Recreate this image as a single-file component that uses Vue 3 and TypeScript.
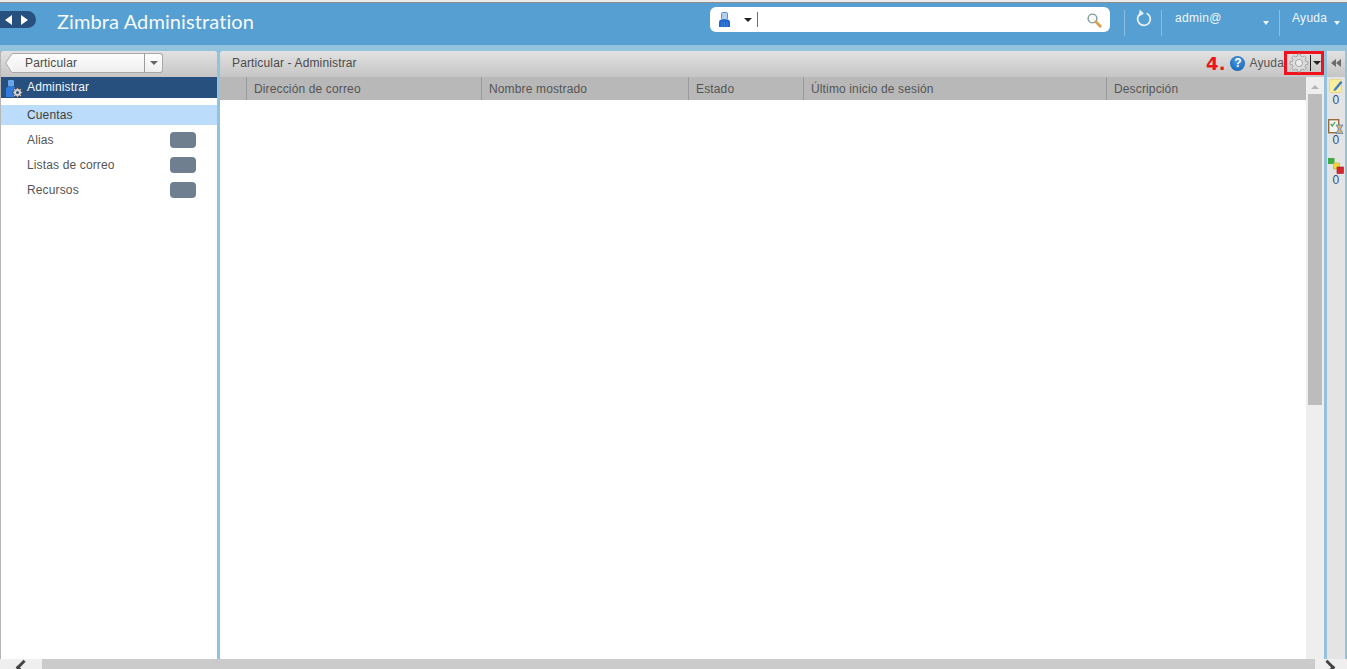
<script setup lang="ts">
const navItems = [
  { label: 'Cuentas', selected: true, badge: false },
  { label: 'Alias', selected: false, badge: true },
  { label: 'Listas de correo', selected: false, badge: true },
  { label: 'Recursos', selected: false, badge: true },
]

const columns = [
  { label: '', width: 27 },
  { label: 'Dirección de correo', width: 235 },
  { label: 'Nombre mostrado', width: 207 },
  { label: 'Estado', width: 115 },
  { label: 'Último inicio de sesión', width: 303 },
  { label: 'Descripción', width: 199 },
]

// cog outline, used by the toolbar button and the section icon
const gearPath = (cx: number, cy: number, outer: number, inner: number, teeth: number) => {
  const pts: string[] = []
  const step = (Math.PI * 2) / teeth
  for (let i = 0; i < teeth; i++) {
    const a = i * step
    const offsets = [
      [-0.3, inner],
      [-0.18, outer],
      [0.18, outer],
      [0.3, inner],
    ]
    for (const [o, r] of offsets) {
      const t = a + o * step
      pts.push(`${(cx + Math.cos(t) * r).toFixed(2)} ${(cy + Math.sin(t) * r).toFixed(2)}`)
    }
  }
  return `M${pts.join('L')}Z`
}

const toolbarGear = gearPath(10, 10, 9, 7, 8)
const sectionGear = gearPath(11.5, 12.5, 5, 3.8, 8)
</script>

<template>
  <div class="app">
    <div class="top-strip"></div>
    <header class="header">
      <div class="history">
        <span class="tri tri-left"></span>
        <span class="tri tri-right"></span>
      </div>
      <div class="brand">Zimbra Administration</div>
      <div class="search">
        <svg class="search-user" width="11" height="15" viewBox="0 0 11 15">
          <rect x="2.5" y="0.5" width="6" height="7" rx="1" fill="#b4cfee" stroke="#5a8fd0" />
          <path d="M0 15V10.5Q0 7.5 3 7.5H8Q11 7.5 11 10.5V15Z" fill="#1f68d0" />
          <path d="M3 10V15M5.5 10V15M8 10V15" stroke="#5b93e0" stroke-width="0.6" />
        </svg>
        <span class="search-caret"></span>
        <span class="search-cursor"></span>
        <svg class="search-glass" width="15" height="15" viewBox="0 0 15 15">
          <circle cx="5.5" cy="5.5" r="4.4" fill="#f6fafa" stroke="#7f9a9c" stroke-width="1.4" />
          <path d="M8.8 8.8L13.3 13.3" stroke="#d9a24a" stroke-width="2.8" stroke-linecap="round" />
        </svg>
      </div>
      <div class="sep sep-a"></div>
      <svg class="refresh" width="16" height="18" viewBox="0 0 16 18">
        <path d="M4.6 4.6A6.4 6.4 0 1 0 10.6 4.2" fill="none" stroke="#e8f2f9" stroke-width="1.8" />
        <path d="M3.6 0.6L8 4.4L3 7.4Z" fill="#e8f2f9" />
      </svg>
      <div class="sep sep-b"></div>
      <div class="user">admin@</div>
      <span class="head-caret caret-user"></span>
      <div class="sep sep-c"></div>
      <div class="user help">Ayuda</div>
      <span class="head-caret caret-help"></span>
    </header>
    <div class="band"></div>

    <div class="body">
      <aside class="left">
        <div class="left-bar">
          <div class="crumb">
            <svg class="crumb-back" width="8" height="20" viewBox="0 0 8 20">
              <path d="M8 0.5H7L0.7 10L7 19.5H8" fill="#f6f6f6" stroke="#a8a8a8" />
            </svg>
            <span class="crumb-label">Particular</span>
            <span class="crumb-drop"><span class="drop-tri"></span></span>
          </div>
        </div>
        <div class="section">
          <svg class="section-icon" width="17" height="18" viewBox="0 0 17 18">
            <rect x="2" y="0" width="6" height="6.5" rx="1" fill="#6aa6ec" />
            <path d="M0 17V9Q0 7 2 7H9V17Z" fill="#2f7be0" />
            <path :d="sectionGear" fill="#d4d4d4" stroke="#3a3a3a" stroke-width="0.7" />
            <circle cx="11.5" cy="12.5" r="1.5" fill="#27507f" />
          </svg>
          <span>Administrar</span>
        </div>
        <ul class="nav">
          <li v-for="item in navItems" :key="item.label" :class="['nav-item', { selected: item.selected }]">
            <span>{{ item.label }}</span>
            <span v-if="item.badge" class="badge"></span>
          </li>
        </ul>
      </aside>

      <main class="main">
        <div class="main-bar">
          <span class="main-title">Particular - Administrar</span>
          <span class="step">4.</span>
          <span class="help-icon">?</span>
          <span class="main-help">Ayuda</span>
          <div class="gear-box">
            <svg width="20" height="20" viewBox="0 0 20 20">
              <path :d="toolbarGear" fill="#dcdcdc" stroke="#a6a6a6" />
              <circle cx="10" cy="10" r="3.6" fill="#ececec" stroke="#a6a6a6" />
            </svg>
            <span class="gear-line"></span>
            <span class="gear-caret"></span>
          </div>
        </div>
        <div class="table">
          <div class="table-main">
            <div class="table-head">
              <div v-for="col in columns" :key="col.label" class="col" :style="{ width: col.width + 'px' }">
                {{ col.label }}
              </div>
            </div>
            <div class="rows"></div>
          </div>
          <div class="vscroll">
            <span class="up-tri"></span>
            <div class="thumb"></div>
          </div>
        </div>
      </main>

      <aside class="right">
        <div class="collapse">
          <span class="dbl"></span>
          <span class="dbl"></span>
        </div>
        <div class="status">
          <div class="status-icon">
            <svg width="14" height="14" viewBox="0 0 14 14">
              <rect x="0.5" y="0.5" width="12" height="13" rx="1" fill="#f9ee9c" stroke="#e6d98a" />
              <path d="M5 10L11.5 2L13.5 3.5L6.8 11.5L4.5 12Z" fill="#3f7fc4" />
            </svg>
          </div>
          <span>0</span>
        </div>
        <div class="status">
          <div class="status-icon">
            <svg width="16" height="15" viewBox="0 0 16 15">
              <rect x="0.7" y="0.7" width="10" height="13" fill="#f4f4f4" stroke="#9a6b3a" stroke-width="1.4" />
              <path d="M2.8 5L4.3 7L7 3" fill="none" stroke="#3aa648" stroke-width="1.3" />
              <path d="M8 6H15L12.5 10L15 14.5H8L10.5 10Z" fill="#cdb27a" stroke="#5d89b8" stroke-width="0.8" />
            </svg>
          </div>
          <span>0</span>
        </div>
        <div class="status">
          <div class="status-icon">
            <svg width="16" height="16" viewBox="0 0 16 16">
              <rect x="0" y="0" width="6.5" height="6" fill="#43ab43" />
              <rect x="5.5" y="5" width="6" height="6" fill="#f0d83c" stroke="#c9a92a" stroke-width="0.6" />
              <rect x="9" y="9" width="6.5" height="6.5" fill="#d8262c" stroke="#9c1c20" stroke-width="0.6" />
            </svg>
          </div>
          <span>0</span>
        </div>
      </aside>
    </div>

    <div class="hscroll">
      <div class="h-end h-left"><span class="chev chev-left"></span></div>
      <div class="h-thumb"></div>
      <div class="h-end h-right"><span class="chev chev-right"></span></div>
    </div>
  </div>
</template>

<style>
html,
body {
  margin: 0;
  overflow: hidden;
}
</style>

<style scoped>
.app {
  width: 1347px;
  height: 669px;
  display: flex;
  flex-direction: column;
  overflow: hidden;
  background: #93c3dc;
  font-family: 'Liberation Sans', Arial, sans-serif;
  font-size: 12px;
  letter-spacing: 0.14px;
  color: #4a4a4a;
}

.top-strip {
  height: 3px;
  flex: none;
  background: linear-gradient(#ececec 0 2px, #8d8d8d 2px);
}

.header {
  height: 42px;
  flex: none;
  position: relative;
  display: flex;
  align-items: flex-start;
  background: #559fd2;
  color: #fff;
}

.history {
  width: 36px;
  height: 17px;
  margin-top: 8px;
  flex: none;
  display: flex;
  align-items: center;
  justify-content: center;
  gap: 9px;
  padding-right: 4px;
  box-sizing: border-box;
  background: #27507f;
  border-radius: 0 9px 9px 0;
}

.tri {
  width: 0;
  height: 0;
  border-top: 5px solid transparent;
  border-bottom: 5px solid transparent;
}

.tri-left {
  border-right: 7px solid #fff;
}

.tri-right {
  border-left: 7px solid #fff;
}

.brand {
  margin: 6px 0 0 21px;
  width: 500px;
  font-family: Lato, 'Open Sans', sans-serif;
  font-size: 20px;
  line-height: 24px;
  letter-spacing: 0.1px;
  color: #f5fafd;
}

.search {
  position: absolute;
  left: 710px;
  top: 4px;
  width: 400px;
  height: 25px;
  background: #fff;
  border-radius: 6px;
}

.search-user {
  position: absolute;
  left: 9px;
  top: 5px;
}

.search-caret {
  position: absolute;
  left: 34px;
  top: 11px;
  border-left: 4px solid transparent;
  border-right: 4px solid transparent;
  border-top: 4px solid #222;
}

.search-cursor {
  position: absolute;
  left: 47px;
  top: 5px;
  width: 1px;
  height: 15px;
  background: #6b6b6b;
}

.search-glass {
  position: absolute;
  right: 8px;
  top: 6px;
}

.sep {
  position: absolute;
  top: 7px;
  width: 1px;
  height: 26px;
  background: #8bbfe1;
}

.sep-a {
  left: 1124px;
}

.sep-b {
  left: 1161px;
}

.sep-c {
  left: 1279px;
}

.refresh {
  position: absolute;
  left: 1136px;
  top: 6px;
}

.user {
  position: absolute;
  left: 1175px;
  top: 7px;
  line-height: 16px;
  letter-spacing: 0.3px;
  color: #f2f7fb;
}

.help {
  left: 1292px;
}

.head-caret {
  position: absolute;
  top: 18px;
  border-left: 3.5px solid transparent;
  border-right: 3.5px solid transparent;
  border-top: 4px solid #f2f7fb;
}

.caret-user {
  left: 1263px;
}

.caret-help {
  left: 1334px;
}

.band {
  height: 6px;
  flex: none;
  background: #93c3dc;
}

.body {
  flex: 1;
  min-height: 0;
  display: flex;
  gap: 3px;
  padding-left: 1px;
  border-left: 1px solid #b5b5b5;
  box-sizing: border-box;
}

.left {
  width: 216px;
  flex: none;
  margin-left: -1px;
  display: flex;
  flex-direction: column;
  background: #fff;
  border-radius: 4px 4px 0 0;
}

.left-bar,
.main-bar {
  height: 26px;
  flex: none;
  box-sizing: border-box;
  background: linear-gradient(#e2e2e2, #c6c5c5);
  border-radius: 4px 4px 0 0;
}

.left-bar {
  display: flex;
  padding: 2px 0 0 12px;
}

.crumb {
  width: 150px;
  height: 20px;
  display: flex;
  align-items: center;
  position: relative;
  box-sizing: border-box;
  padding-left: 12px;
  background: linear-gradient(#fdfdfd, #eeeeee);
  border: 1px solid #a8a8a8;
  border-left: none;
  border-radius: 0 3px 3px 0;
}

.crumb-back {
  position: absolute;
  left: -8px;
  top: -1px;
}

.crumb-label {
  flex: 1;
  color: #4b4b4b;
}

.crumb-drop {
  width: 18px;
  height: 100%;
  flex: none;
  display: flex;
  align-items: center;
  justify-content: center;
  border-left: 1px solid #9c9c9c;
  box-sizing: border-box;
}

.drop-tri {
  border-left: 4px solid transparent;
  border-right: 4px solid transparent;
  border-top: 4px solid #666;
}

.section {
  height: 21px;
  flex: none;
  box-sizing: border-box;
  display: flex;
  align-items: center;
  gap: 4px;
  padding: 0 0 2px 5px;
  background: #27507f;
  color: #f4f7fa;
}

.section-icon {
  flex: none;
  margin-top: 5px;
}

.nav {
  list-style: none;
  margin: 7px 0 0;
  padding: 0;
}

.nav-item {
  height: 25px;
  display: flex;
  align-items: center;
  justify-content: space-between;
  padding: 0 21px 0 26px;
  line-height: 20px;
  color: #555;
}

.nav-item.selected {
  height: 20px;
  margin-bottom: 2px;
  background: #bcdcfb;
  color: #3f3f3f;
}

.badge {
  width: 26px;
  height: 16px;
  background: #6f7f90;
  border-radius: 4px;
}

.main {
  width: 1104px;
  flex: none;
  display: flex;
  flex-direction: column;
  background: #fff;
  border-radius: 4px 4px 0 0;
}

.main-bar {
  display: flex;
  align-items: center;
  padding: 0 0 2px 12px;
}

.main-title {
  flex: 1;
  color: #4b4b4b;
}

.step {
  margin-right: 5px;
  font-family: 'DejaVu Sans', sans-serif;
  font-size: 18px;
  font-weight: 700;
  letter-spacing: 0;
  color: #f0121c;
}

.help-icon {
  width: 15px;
  height: 15px;
  margin-right: 4px;
  border-radius: 50%;
  background: radial-gradient(circle at 50% 35%, #4b9be6, #0f5aa8);
  color: #fff;
  font-size: 12px;
  font-weight: 700;
  line-height: 15px;
  text-align: center;
}

.main-help {
  color: #555;
}

.gear-box {
  width: 40px;
  height: 24px;
  flex: none;
  display: flex;
  align-items: center;
  box-sizing: border-box;
  padding-left: 2px;
  border: 3px solid #f0121c;
}

.gear-line {
  width: 1px;
  height: 16px;
  margin-left: 1px;
  background: #222;
}

.gear-caret {
  margin-left: 2px;
  border-left: 4px solid transparent;
  border-right: 4px solid transparent;
  border-top: 4px solid #222;
}

.table {
  flex: 1;
  min-height: 0;
  display: flex;
}

.table-main {
  flex: 1;
  min-width: 0;
  display: flex;
  flex-direction: column;
}

.table-head {
  height: 23px;
  flex: none;
  display: flex;
  background: #b8b8b8;
}

.col {
  flex: none;
  box-sizing: border-box;
  padding-left: 7px;
  line-height: 25px;
  color: #555;
  border-right: 1px solid #9a9a9a;
}

.col:last-child {
  border-right: none;
}

.rows {
  flex: 1;
}

.vscroll {
  width: 18px;
  flex: none;
  position: relative;
  background: #eeeeee;
}

.up-tri {
  position: absolute;
  left: 5px;
  top: 8px;
  border-left: 4px solid transparent;
  border-right: 4px solid transparent;
  border-bottom: 4px solid #b4b4b4;
}

.thumb {
  position: absolute;
  left: 2px;
  top: 17px;
  width: 14px;
  height: 311px;
  background: #bcbcbc;
}

.right {
  width: 18px;
  flex: none;
  display: flex;
  flex-direction: column;
  align-items: center;
  background: #e4e4e4;
}

.collapse {
  width: 100%;
  height: 26px;
  flex: none;
  box-sizing: border-box;
  padding-bottom: 2px;
  display: flex;
  align-items: center;
  justify-content: center;
  background: linear-gradient(#e2e2e2, #c6c5c5);
  border-radius: 4px 4px 0 0;
}

.dbl {
  border-top: 4px solid transparent;
  border-bottom: 4px solid transparent;
  border-right: 5px solid #6c6c6c;
}

.status {
  height: 40px;
  flex: none;
  box-sizing: border-box;
  padding-top: 1px;
  display: flex;
  flex-direction: column;
  align-items: center;
  color: #2f4f8c;
  line-height: 12px;
}

.status-icon {
  height: 16px;
  display: flex;
  align-items: center;
}

.hscroll {
  height: 10px;
  flex: none;
  display: flex;
  background: #efefef;
}

.h-end {
  width: 42px;
  flex: none;
  position: relative;
  overflow: hidden;
}

.h-right {
  width: 32px;
}

.h-thumb {
  flex: 1;
  background: #cbcbcb;
}

.chev {
  position: absolute;
  top: 3px;
  width: 8px;
  height: 8px;
  border-top: 3px solid #444;
  transform: rotate(-45deg);
}

.chev-left {
  left: 18px;
  border-left: 3px solid #444;
}

.chev-right {
  left: 7px;
  border-right: 3px solid #444;
  transform: rotate(45deg);
}
</style>
